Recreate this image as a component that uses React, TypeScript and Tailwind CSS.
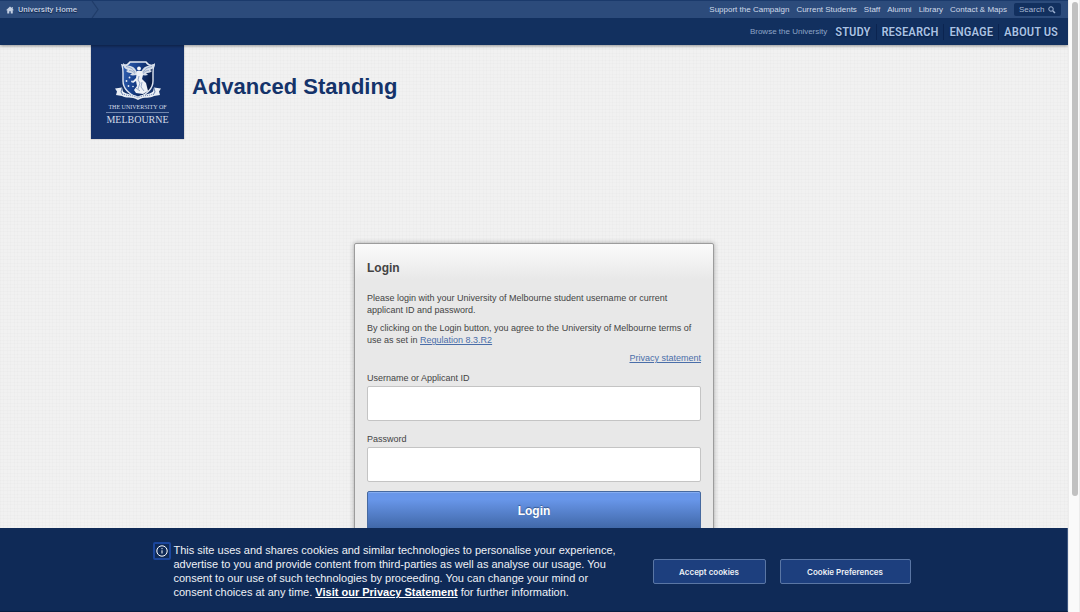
import { useState } from 'react';
import type { FormEvent } from 'react';

const TOP_LINKS = [
  'Support the Campaign',
  'Current Students',
  'Staff',
  'Alumni',
  'Library',
  'Contact & Maps',
];

const MAIN_LINKS = ['STUDY', 'RESEARCH', 'ENGAGE', 'ABOUT US'];

function HomeIcon() {
  return (
    <svg viewBox="0 0 16 16" className="size-2 fill-[#c3cfe2]" aria-hidden="true">
      <path d="M8 1 0 8.500h2.500V15H6.500v-4.500h3V15h4V8.500H16l-2.500-2.400V2H11.500v2.200z" />
    </svg>
  );
}

function SearchIcon() {
  return (
    <svg
      viewBox="0 0 16 16"
      className="size-2 fill-none stroke-[#9fb3d3]"
      strokeWidth="2"
      aria-hidden="true"
    >
      <circle cx="6" cy="6" r="4.500" />
      <path d="m9.500 9.500 4.500 4.500" strokeWidth="3" />
    </svg>
  );
}

function Crest() {
  return (
    <svg viewBox="0 0 46 40" className="h-10 w-[46px]" aria-hidden="true">
      <defs>
        <linearGradient id="shield" x1="0" y1="0" x2="1" y2="0.3">
          <stop offset="0" stopColor="#3565b8" />
          <stop offset="0.5" stopColor="#17408c" />
          <stop offset="1" stopColor="#081a42" />
        </linearGradient>
      </defs>
      <path
        d="M7 4c3 1 6 0 8-3h16c2 3 5 4 8 3-1 3-1 5-1 8v8c0 8-6 13-15 17C14 33 8 28 8 20v-8c0-3 0-5-1-8z"
        fill="url(#shield)"
        stroke="#dfe6f1"
        strokeWidth="1.400"
      />
      {/* wings */}
      <path
        d="M24 13c-2-1-3-5-6-7-3-2-7-1-10-4 0 4 2 6 5 7l-2 1c2 2 4 2 6 2l-2 2c3 1 5 0 7 0h4c2 0 4 1 7 0l-2-2c2 0 4 0 6-2l-2-1c3-1 5-3 5-7-3 3-7 2-10 4-3 2-4 6-6 7z"
        fill="#d5dde9"
      />
      <path
        d="M11 5.500c4 1 7 2 9 6M14 9.500c3 0 4 1 6 3M37 5.500c-4 1-7 2-9 6M34 9.500c-3 0-4 1-6 3"
        stroke="#6d88b3"
        strokeWidth="0.600"
        fill="none"
      />
      {/* figure */}
      <circle cx="24" cy="7.500" r="1.900" fill="#f5f7fb" />
      <path
        d="M22 10h5l1 4-1 4 4 4 2 8-5 3-7-1-2-3 3-4-1-5-3 2-1-1 4-4z"
        fill="#edf1f7"
      />
      <path
        d="M24 15l-1 4 2 3-2 6M27 21l-1 5 3 4M21 27l4 3"
        stroke="#7f95ba"
        strokeWidth="0.800"
        fill="none"
      />
      {/* stars */}
      <g fill="#e3eaf6">
        <circle cx="14.500" cy="16.500" r="0.900" />
        <circle cx="11.500" cy="20" r="0.900" />
        <circle cx="17" cy="20.500" r="0.900" />
        <circle cx="13.500" cy="25" r="0.900" />
        <circle cx="18" cy="25.500" r="0.800" />
      </g>
      {/* ribbon */}
      <path
        d="M0 27.500l7-1 1 4c5 4 9 2 15 5 6-3 10-1 15-5l1-4 7 1-2 3 1 3.500-6 1c-4 3-9 0-16 4-7-4-12-1-16-4l-6-1 1-3.500z"
        fill="#e8edf4"
      />
      <path
        d="M7 27l-1 4 2 3M39 27l1 4-2 3"
        stroke="#4b6798"
        strokeWidth="0.800"
        fill="none"
      />
      <path
        d="M9 33.500c5 2 9 0 14 3.500 5-3.500 9-1.500 14-3.500"
        stroke="#7289b2"
        strokeWidth="1"
        strokeDasharray="1 1"
        fill="none"
      />
    </svg>
  );
}

function Header() {
  return (
    <header className="relative z-10 bg-[#12305f] shadow-[0_1px_3px_rgba(0,0,0,0.4)]">
      <div className="flex h-[18px] items-center justify-between border-t border-[#1b3a6b] bg-[#2c4b7b] pr-[7px] text-[8px] text-[#d0dae9]">
        <div className="flex h-full items-center">
          <a
            href="#home"
            className="flex items-center gap-1 pl-[6px] font-['Roboto',sans-serif] font-medium text-[#c3cfe2] [text-shadow:0_1px_1px_#0b1f42]"
          >
            <HomeIcon />
            University Home
          </a>
          <svg viewBox="0 0 8 17" className="ml-[14px] h-full w-2 fill-none stroke-[#203c69]" aria-hidden="true">
            <path d="M1 0l6 8.500L1 17" strokeWidth="1.200" />
          </svg>
        </div>
        <nav className="flex items-center gap-[7px]" aria-label="University links">
          {TOP_LINKS.map((label) => (
            <a key={label} href="#top">
              {label}
            </a>
          ))}
          <button
            type="button"
            className="flex h-[13px] w-[47px] items-center justify-between rounded-xs bg-[#12305f] px-[5px] text-[8px] leading-[13px] text-[#a9bad4]"
          >
            Search
            <SearchIcon />
          </button>
        </nav>
      </div>
      <nav className="flex h-[27px] items-center justify-end pr-[5px]" aria-label="Browse">
        <span className="pr-[3px] text-[8px] text-[#8ea4c6]">Browse the University</span>
        {MAIN_LINKS.map((label) => (
          <a
            key={label}
            href="#browse"
            className="border-r border-[#0b2450] px-[5px] font-['Roboto_Condensed','Liberation_Sans_Narrow','Liberation_Sans',sans-serif] text-[13px] leading-4 font-medium text-[#a9c2e4] [text-shadow:0_1px_2px_#071a3c] last:border-r-0"
          >
            {label}
          </a>
        ))}
      </nav>
    </header>
  );
}

function Brand() {
  return (
    <div className="ml-[91px] flex gap-2">
      <a
        href="#home"
        className="flex h-[94px] w-[93px] flex-col items-center bg-[#15326a] pt-4 font-['Liberation_Serif',serif] text-[#d3dbe8] shadow-[0_0_1px_rgba(0,0,0,0.5)]"
      >
        <Crest />
        <span className="mt-[2px] text-[6px] leading-[8px]">THE UNIVERSITY OF</span>
        <span className="mt-px border-t border-[#7186ad] pt-px text-[10px] leading-[12px]">
          MELBOURNE
        </span>
      </a>
      <h1 className="pt-[26px] text-[22px] leading-8 font-bold text-[#14336a]">
        Advanced Standing
      </h1>
    </div>
  );
}

function LoginForm() {
  const [username, setUsername] = useState('');
  const [password, setPassword] = useState('');

  const onSubmit = (e: FormEvent) => e.preventDefault();

  return (
    <form
      onSubmit={onSubmit}
      className="mx-auto mt-[104px] w-[360px] rounded-xs border border-[#9c9c9c] bg-[#e8e8e8] bg-[linear-gradient(#fbfbfb,#e8e8e8_36px)] px-3 pt-4 pb-6 text-[9px] leading-3 text-[#444] shadow-[0_0_5px_rgba(0,0,0,0.3)]"
    >
      <h2 className="mb-4 text-xs leading-4 font-bold">Login</h2>
      <p className="mb-[6px]">
        Please login with your University of Melbourne student username or
        current applicant ID and password.
      </p>
      <p className="mb-[6px]">
        By clicking on the Login button, you agree to the University of
        Melbourne terms of use as set in{' '}
        <a href="#regulation" className="text-[#4a6ea9] underline">
          Regulation 8.3.R2
        </a>
      </p>
      <p className="mb-2 text-right">
        <a href="#privacy" className="text-[#4a6ea9] underline">
          Privacy statement
        </a>
      </p>
      <label htmlFor="username" className="mb-[2px] block">
        Username or Applicant ID
      </label>
      <input
        id="username"
        type="text"
        value={username}
        onChange={(e) => setUsername(e.target.value)}
        className="mb-3 block h-[35px] w-full rounded-xs border border-[#c4c4c4] bg-white px-2 text-xs"
      />
      <label htmlFor="password" className="mb-[2px] block">
        Password
      </label>
      <input
        id="password"
        type="password"
        value={password}
        onChange={(e) => setPassword(e.target.value)}
        className="mb-[9px] block h-[35px] w-full rounded-xs border border-[#c4c4c4] bg-white px-2 text-xs"
      />
      <button
        type="submit"
        className="h-10 w-full rounded-xs border border-[#46699f] bg-linear-to-b from-[#6896e9] from-20% to-[#3e65a4] text-xs font-bold text-white shadow-[inset_0_1px_0_#85acf0] [text-shadow:0_-1px_1px_#34568e]"
      >
        Login
      </button>
    </form>
  );
}

function CookieBanner() {
  return (
    <section
      aria-label="Cookies"
      className="absolute inset-x-0 bottom-0 z-20 flex h-[84px] items-center justify-center border-r border-b border-r-[#3d5680] border-b-[#0a1f42] bg-[#0f2a57] pr-1 text-[11px] text-[#eef1f6]"
    >
      <div className="flex items-start gap-[3px] pt-[2px]">
        <span className="flex size-[18px] items-center justify-center rounded-xs border-2 border-[#1b469c]">
          <svg viewBox="0 0 12 12" className="size-3 fill-none stroke-white" aria-hidden="true">
            <circle cx="6" cy="6" r="5.200" strokeWidth="1" />
            <path d="M6 5.300v3.200M6 3.100v1.100" strokeWidth="1" />
          </svg>
        </span>
        <p className="w-[450px] pt-px leading-[14px]">
          This site uses and shares cookies and similar technologies to
          personalise your experience, advertise to you and provide content from
          third-parties as well as analyse our usage. You consent to our use of
          such technologies by proceeding. You can change your mind or consent
          choices at any time.{' '}
          <a href="#privacy" className="font-bold text-white underline">
            Visit our Privacy Statement
          </a>{' '}
          for further information.
        </p>
      </div>
      <div className="ml-[29px] flex gap-[14px] pt-[3px] font-['Inter',sans-serif] text-[8px] font-semibold">
        <button type="button" className="h-[25px] w-[113px] rounded-xs border border-[#5a76a4] bg-[#1d3f7e] pt-px">
          Accept cookies
        </button>
        <button type="button" className="h-[25px] w-[131px] rounded-xs border border-[#5a76a4] bg-[#1d3f7e] pt-px">
          Cookie Preferences
        </button>
      </div>
    </section>
  );
}

export default function App() {
  return (
    <div className="flex h-screen overflow-hidden font-['Liberation_Sans',Arial,sans-serif]">
      <div className="relative flex-1 overflow-hidden bg-[#f1f1f1] bg-[repeating-linear-gradient(90deg,rgba(0,0,0,0.012)_0_1px,transparent_1px_3px,rgba(0,0,0,0.01)_3px_4px,transparent_4px_7px),repeating-linear-gradient(rgba(0,0,0,0.012)_0_1px,transparent_1px_4px,rgba(0,0,0,0.01)_4px_5px,transparent_5px_7px)]">
        <Header />
        <Brand />
        <LoginForm />
        <CookieBanner />
      </div>
      <div className="w-3 shrink-0 border-x border-[#ececec] bg-[#fafafa] pt-[2px] pr-px pl-[3px]">
        <div className="h-[81%] rounded-full bg-[#c1c1c1]" />
      </div>
    </div>
  );
}
